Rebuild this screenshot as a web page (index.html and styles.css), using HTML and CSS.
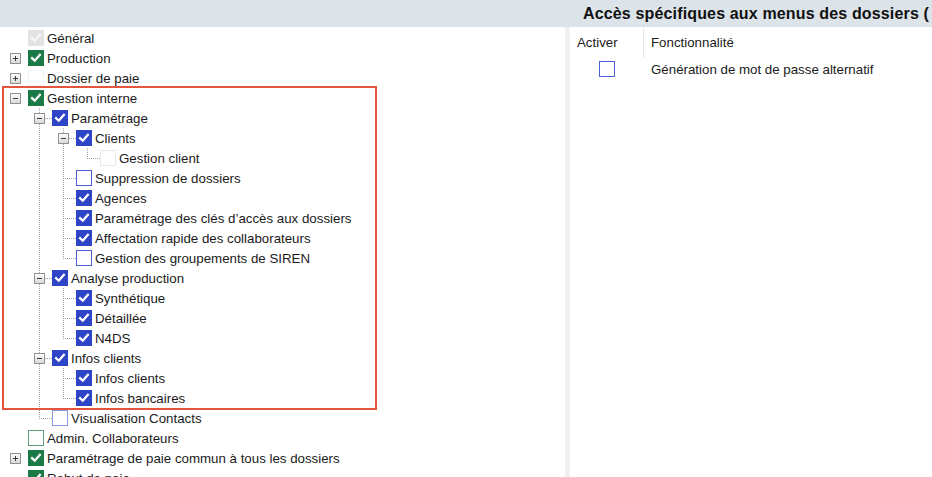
FILE: index.html
```html
<!DOCTYPE html>
<html lang="fr">
<head>
    <meta charset="UTF-8">
    <title>Accès spécifiques aux menus des dossiers</title>
    <link rel="stylesheet" href="styles.css">
</head>
<body>
    <svg class="defs" aria-hidden="true">
        <symbol id="tick" viewBox="0 0 16 16">
            <path d="M3.5 8.2 L6.6 11.1 L12.4 4.5" fill="none" stroke-width="2.6" stroke-linecap="square"/>
        </symbol>
    </svg>

    <div class="window">
        <header class="title-bar">
            <h1 class="title">Accès spécifiques aux menus des dossiers (</h1>
        </header>

        <div class="panes">
            <!-- arbre des menus -->
            <div class="tree-pane">
                <ul class="tree">
                    <li class="node"><span class="branch"></span><span class="check disabled on"><svg><use href="#tick"/></svg></span><span class="label">Général</span></li>
                    <li class="node"><span class="branch"><span class="expander plus"></span></span><span class="check green on"><svg><use href="#tick"/></svg></span><span class="label">Production</span></li>
                    <li class="node"><span class="branch"><span class="expander plus"></span></span><span class="check blank"></span><span class="label">Dossier de paie</span></li>
                    <li class="node"><span class="branch"><span class="expander minus"></span></span><span class="check green on"><svg><use href="#tick"/></svg></span><span class="label">Gestion interne</span></li>

                    <li class="node"><span class="col"></span><span class="branch tee"><span class="expander minus"></span></span><span class="check blue on"><svg><use href="#tick"/></svg></span><span class="label">Paramétrage</span></li>
                    <li class="node"><span class="col"></span><span class="col line"></span><span class="branch tee"><span class="expander minus"></span></span><span class="check blue on"><svg><use href="#tick"/></svg></span><span class="label">Clients</span></li>
                    <li class="node"><span class="col"></span><span class="col line"></span><span class="col line"></span><span class="branch ell"></span><span class="check disabled"></span><span class="label">Gestion client</span></li>
                    <li class="node"><span class="col"></span><span class="col line"></span><span class="branch tee"></span><span class="check blue"></span><span class="label">Suppression de dossiers</span></li>
                    <li class="node"><span class="col"></span><span class="col line"></span><span class="branch tee"></span><span class="check blue on"><svg><use href="#tick"/></svg></span><span class="label">Agences</span></li>
                    <li class="node"><span class="col"></span><span class="col line"></span><span class="branch tee"></span><span class="check blue on"><svg><use href="#tick"/></svg></span><span class="label">Paramétrage des clés d’accès aux dossiers</span></li>
                    <li class="node"><span class="col"></span><span class="col line"></span><span class="branch tee"></span><span class="check blue on"><svg><use href="#tick"/></svg></span><span class="label">Affectation rapide des collaborateurs</span></li>
                    <li class="node"><span class="col"></span><span class="col line"></span><span class="branch ell"></span><span class="check blue"></span><span class="label">Gestion des groupements de SIREN</span></li>

                    <li class="node"><span class="col"></span><span class="branch tee"><span class="expander minus"></span></span><span class="check blue on"><svg><use href="#tick"/></svg></span><span class="label">Analyse production</span></li>
                    <li class="node"><span class="col"></span><span class="col line"></span><span class="branch tee"></span><span class="check blue on"><svg><use href="#tick"/></svg></span><span class="label">Synthétique</span></li>
                    <li class="node"><span class="col"></span><span class="col line"></span><span class="branch tee"></span><span class="check blue on"><svg><use href="#tick"/></svg></span><span class="label">Détaillée</span></li>
                    <li class="node"><span class="col"></span><span class="col line"></span><span class="branch ell"></span><span class="check blue on"><svg><use href="#tick"/></svg></span><span class="label">N4DS</span></li>

                    <li class="node"><span class="col"></span><span class="branch tee"><span class="expander minus"></span></span><span class="check blue on"><svg><use href="#tick"/></svg></span><span class="label">Infos clients</span></li>
                    <li class="node"><span class="col"></span><span class="col line"></span><span class="branch tee"></span><span class="check blue on"><svg><use href="#tick"/></svg></span><span class="label">Infos clients</span></li>
                    <li class="node"><span class="col"></span><span class="col line"></span><span class="branch ell"></span><span class="check blue on"><svg><use href="#tick"/></svg></span><span class="label">Infos bancaires</span></li>

                    <li class="node"><span class="col"></span><span class="branch ell"></span><span class="check pale"></span><span class="label">Visualisation Contacts</span></li>

                    <li class="node"><span class="branch"></span><span class="check green"></span><span class="label">Admin. Collaborateurs</span></li>
                    <li class="node"><span class="branch"><span class="expander plus"></span></span><span class="check green on"><svg><use href="#tick"/></svg></span><span class="label">Paramétrage de paie commun à tous les dossiers</span></li>
                    <li class="node"><span class="branch"></span><span class="check green on"><svg><use href="#tick"/></svg></span><span class="label">Rebut de paie</span></li>
                </ul>

                <div class="highlight"></div>
            </div>

            <div class="splitter"></div>

            <!-- fonctionnalités -->
            <div class="grid-pane">
                <div class="grid-head">
                    <div class="cell col-on">Activer</div>
                    <div class="cell col-func">Fonctionnalité</div>
                </div>
                <div class="grid-row">
                    <div class="cell col-on"><span class="check blue"></span></div>
                    <div class="cell col-func">Génération de mot de passe alternatif</div>
                </div>
            </div>
        </div>
    </div>
</body>
</html>
```

FILE: styles.css
```css
* {
    margin: 0;
    padding: 0;
    box-sizing: border-box;
}

body {
    background: #fff;
    color: #1b1b1b;
    font-family: "Liberation Sans", Arial, sans-serif;
    font-size: 13.3px;
    overflow: hidden;
}

.defs {
    position: absolute;
    width: 0;
    height: 0;
}

.window {
    width: 932px;
    height: 477px;
    display: flex;
    flex-direction: column;
}

/* barre de titre */
.title-bar {
    height: 27px;
    flex: none;
    background: #dce4ea;
    display: grid;
    grid-template-columns: 570px 1fr;
    align-items: center;
}

.title {
    grid-column: 2;
    padding-left: 13px;
    font-size: 16px;
    font-weight: bold;
    letter-spacing: 0.15px;
    color: #111;
    white-space: nowrap;
    overflow: hidden;
}

.panes {
    flex: 1;
    min-height: 0;
    display: flex;
}

.tree-pane {
    width: 565px;
    flex: none;
    position: relative;
    overflow: hidden;
    padding-top: 1px;
}

.splitter {
    width: 5px;
    flex: none;
    background: #f0f0f0;
}

.grid-pane {
    flex: 1;
}

/* arbre */
.tree {
    list-style: none;
}

.node {
    height: 20px;
    display: flex;
    align-items: center;
    padding-left: 4px;
    white-space: nowrap;
}

.col,
.branch {
    width: 24px;
    height: 20px;
    flex: none;
    display: flex;
    align-items: center;
    background-repeat: no-repeat;
}

.line {
    background-image: repeating-linear-gradient(to bottom, #a3a3a3 0 1px, transparent 1px 2px);
    background-position: 11px 0;
    background-size: 1px 100%;
}

.tee {
    background-image:
        repeating-linear-gradient(to bottom, #a3a3a3 0 1px, transparent 1px 2px),
        repeating-linear-gradient(to right, #a3a3a3 0 1px, transparent 1px 2px);
    background-position: 11px 0, 11px 10px;
    background-size: 1px 100%, 13px 1px;
}

.ell {
    background-image:
        repeating-linear-gradient(to bottom, #a3a3a3 0 1px, transparent 1px 2px),
        repeating-linear-gradient(to right, #a3a3a3 0 1px, transparent 1px 2px);
    background-position: 11px 0, 11px 10px;
    background-size: 1px 10px, 13px 1px;
}

.expander {
    width: 11px;
    height: 11px;
    margin-left: 6px;
    border: 1px solid #929292;
    background-repeat: no-repeat;
}

.expander.minus {
    background-image:
        linear-gradient(#3c3c3c, #3c3c3c),
        linear-gradient(#fdfdfd, #d9d9d9);
    background-position: center, 0 0;
    background-size: 5px 1px, 100% 100%;
}

.expander.plus {
    background-image:
        linear-gradient(#3c3c3c, #3c3c3c),
        linear-gradient(#3c3c3c, #3c3c3c),
        linear-gradient(#fdfdfd, #d9d9d9);
    background-position: center, center, 0 0;
    background-size: 5px 1px, 1px 5px, 100% 100%;
}

/* cases a cocher */
.check {
    width: 16px;
    height: 16px;
    flex: none;
    margin-right: 3px;
    border: 1.5px solid transparent;
    display: flex;
}

.check svg {
    width: 100%;
    height: 100%;
    stroke: #fff;
}

.check.green { border-color: #5e9e78; }
.check.green.on { background: #1c7a46; border-color: #1c7a46; }
.check.blue { border-color: #4b5fd2; }
.check.blue.on { background: #2f45c8; border-color: #2f45c8; }
.check.pale { border-color: #8f9be4; }
.check.disabled { border-color: #e8e8e8; }
.check.disabled.on { background: #e3e3e3; border-color: #e3e3e3; }
.check.disabled.on svg { stroke: #f7f7f7; }
.check.blank { border-color: #f4f4f4; }

.label {
    color: #1b1b1b;
}

/* encadre rouge */
.highlight {
    position: absolute;
    left: 2px;
    top: 59px;
    width: 375px;
    height: 324px;
    border: 2px solid #e5553d;
    pointer-events: none;
}

/* grille de droite */
.grid-head,
.grid-row {
    display: flex;
}

.grid-head {
    height: 31px;
}

.grid-row {
    height: 22px;
}

.cell {
    display: flex;
    align-items: center;
    padding-left: 7px;
    white-space: nowrap;
}

.col-on {
    width: 74px;
}

.grid-head .col-on {
    border-right: 1px solid #e6e6e6;
}

.grid-row .col-on {
    justify-content: center;
    padding-left: 0;
}

.grid-row .check {
    margin-right: 0;
}

.col-func {
    flex: 1;
}
```
